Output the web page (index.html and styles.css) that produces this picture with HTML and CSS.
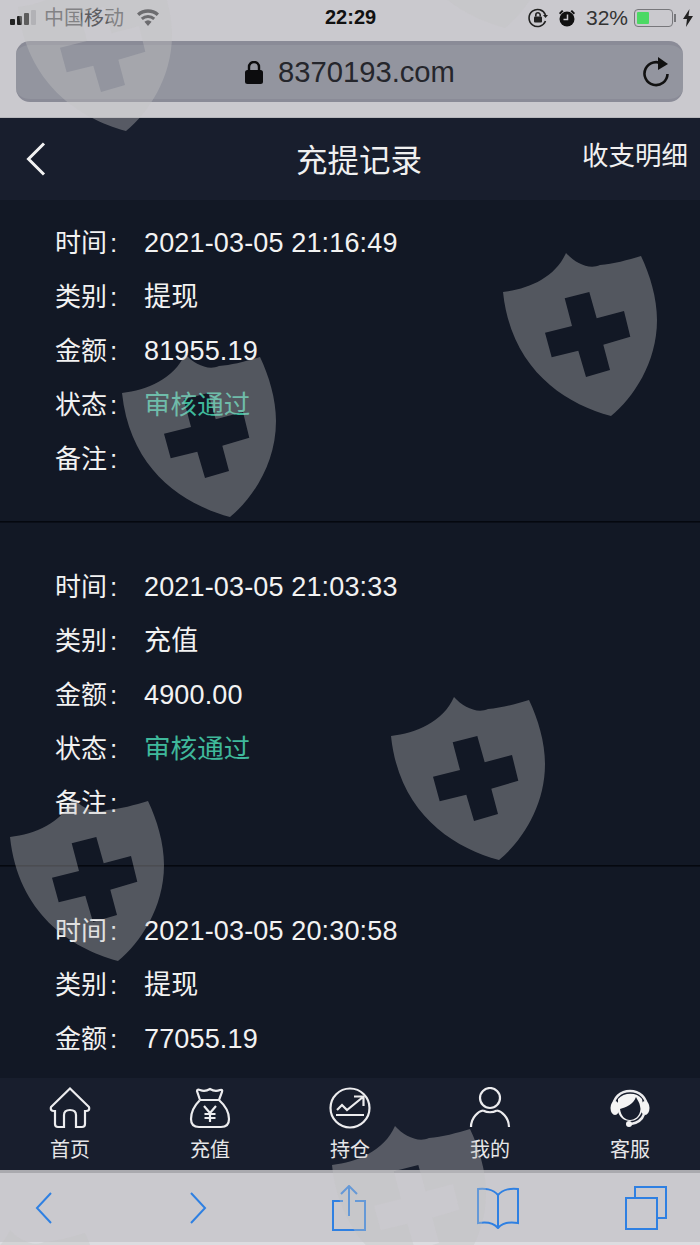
FILE: index.html
```html
<!DOCTYPE html>
<html lang="zh-CN">
<head>
    <meta charset="UTF-8">
    <meta name="viewport" content="width=device-width, initial-scale=1.0">
    <title>充提记录</title>
    <link rel="stylesheet" href="styles.css">
</head>
<body>
    <svg class="defs" width="0" height="0">
        <symbol id="shield" viewBox="0 0 155 164">
            <path fill-rule="evenodd" d="M63 0C72 10 86 17 97 12C110 11 125 7 138 3C147 22 154 45 154 67C154 110 130 145 108 163C60 150 8 115 0 39C25 36 52 25 63 0ZM61.700 45.300L86.300 39L93.700 65.300L121 58L127.300 83.700L100.300 91.700L107 117L83 124L75.300 97.700L48.700 104.300L42 79.700L69 73Z"/>
        </symbol>
    </svg>
    <div class="page">
        <div class="safari-top">
            <div class="status">
                <div class="signal"><i></i><i></i><i></i><i class="off"></i></div>
                <span class="carrier">中国移动</span>
                <svg class="wifi" width="24" height="18" viewBox="0 0 24 18"><path d="M12 17l-3.600-4.200a5.500 5.500 0 0 1 7.200 0zM6.800 11L4.800 8.700a11 11 0 0 1 14.400 0L17.200 11a8 8 0 0 0-10.400 0zM3.300 7L1 4.500a16.500 16.500 0 0 1 22 0L20.700 7a13.500 13.500 0 0 0-17.400 0z"/></svg>
                <span class="time">22:29</span>
                <svg class="rotlock" width="20" height="20" viewBox="0 0 20 20"><path class="ring" d="M17.500 13A8.500 8.500 0 1 1 17.500 7"/><path d="M15 7h5l-2.500 3z"/><rect x="6" y="8.500" width="8" height="6" rx="1"/><path class="ring" d="M7.800 8.500V7a2.200 2.200 0 0 1 4.400 0v1.500"/></svg>
                <svg class="alarm" width="18" height="18" viewBox="0 0 18 18"><circle cx="9" cy="10" r="7.500"/><path d="M1 4l3-3 1.500 1.200-3.300 3.200zM17 4l-3-3-1.500 1.200 3.300 3.200z"/><path class="hand" d="M9.500 5.500V10.500H5.500"/></svg>
                <span class="percent">32%</span>
                <div class="battery"><i></i></div>
                <svg class="bolt" width="10" height="18" viewBox="0 0 10 18"><path d="M6.500 0L0 10h4l-1 8 7-11H5.500z"/></svg>
            </div>
            <div class="urlbar">
                <svg class="lock" width="18" height="23" viewBox="0 0 18 23"><rect y="9" width="18" height="14" rx="2.500"/><path class="shackle" d="M4 10V6a5 5 0 0 1 10 0v4"/></svg>
                <span class="domain">8370193.com</span>
                <svg class="reload" width="28" height="30" viewBox="0 0 28 30"><path class="arc" d="M21 7.500A11.500 11.500 0 1 0 25.500 17"/><path d="M16 0l10 7-10 6z"/></svg>
            </div>
        </div>

        <header class="topbar">
            <svg class="back" width="20" height="34" viewBox="0 0 20 34"><path d="M18 1.500L2.500 17L18 32.500"/></svg>
            <h1 class="title">充提记录</h1>
            <a class="detail">收支明细</a>
        </header>

        <main class="records">
            <div class="record">
                <div class="row"><span class="label">时间<b>:</b></span><span class="value">2021-03-05 21:16:49</span></div>
                <div class="row"><span class="label">类别<b>:</b></span><span class="value">提现</span></div>
                <div class="row"><span class="label">金额<b>:</b></span><span class="value">81955.19</span></div>
                <div class="row"><span class="label">状态<b>:</b></span><span class="value ok">审核通过</span></div>
                <div class="row"><span class="label">备注<b>:</b></span></div>
            </div>
            <div class="record">
                <div class="row"><span class="label">时间<b>:</b></span><span class="value">2021-03-05 21:03:33</span></div>
                <div class="row"><span class="label">类别<b>:</b></span><span class="value">充值</span></div>
                <div class="row"><span class="label">金额<b>:</b></span><span class="value">4900.00</span></div>
                <div class="row"><span class="label">状态<b>:</b></span><span class="value ok">审核通过</span></div>
                <div class="row"><span class="label">备注<b>:</b></span></div>
            </div>
            <div class="record">
                <div class="row"><span class="label">时间<b>:</b></span><span class="value">2021-03-05 20:30:58</span></div>
                <div class="row"><span class="label">类别<b>:</b></span><span class="value">提现</span></div>
                <div class="row"><span class="label">金额<b>:</b></span><span class="value">77055.19</span></div>
            </div>
        </main>

        <nav class="tabbar">
            <a class="tab">
                <svg width="42" height="42" viewBox="0 0 42 42"><path d="M21 1.500L40 20Q41 24 37 24H36V37Q36 40 33 40H27V28Q27 23 21 23Q15 23 15 28V40H9Q6 40 6 37V24H5Q1 24 2 20Z"/></svg>
                <span>首页</span>
            </a>
            <a class="tab">
                <svg width="42" height="42" viewBox="0 0 42 42"><path d="M11 13L8 4Q8 2 11 3Q16 5 21 2Q26 5 31 3Q34 2 33 5L30 13M11 13H30M11 13Q2 22 2 32Q2 40 10 40H32Q40 40 40 32Q40 22 30 13"/><path d="M15 19L21 26L27 19M21 26V35M15.500 27H26.500M15.500 31H26.500"/></svg>
                <span>充值</span>
            </a>
            <a class="tab">
                <svg width="42" height="42" viewBox="0 0 42 42"><circle cx="21" cy="21" r="19.500"/><path d="M8 23L13 18L18 23L34 10M25 9.500H34.500V19M7 28H35"/></svg>
                <span>持仓</span>
            </a>
            <a class="tab">
                <svg width="42" height="42" viewBox="0 0 42 42"><circle cx="21" cy="11" r="10"/><path d="M2 40C2 30 10 24 14 23.500M40 40C40 30 32 24 28 23.500M14 23.500Q21 27 28 23.500"/></svg>
                <span>我的</span>
            </a>
            <a class="tab">
                <svg class="agent" width="42" height="42" viewBox="0 0 42 42"><path class="band" d="M4 22C3 -2 39 -2 38 22"/><ellipse class="pad" cx="6" cy="21" rx="4.500" ry="7"/><ellipse class="pad" cx="36" cy="21" rx="4.500" ry="7"/><path class="hair" d="M9 12C15 5 28 5 33 12C34 16 34 20 33 24C31 31 26 34 21 34C15 34 10 30 9 24Z"/><path class="face" d="M11 22C17 20 24 18 27 10C29 14 31 16 31.500 22C31 29 26 33 21 33C16 33 12 29 11 22Z"/><path class="band" d="M35 27C33 33 28 36 22 37"/><circle class="mic" cx="20" cy="37" r="3"/></svg>
                <span>客服</span>
            </a>
        </nav>

        <div class="safari-bottom">
            <svg class="tool tool-prev" width="17" height="32" viewBox="0 0 17 32"><path d="M16 1L2 16l14 15"/></svg>
            <svg class="tool tool-next" width="17" height="32" viewBox="0 0 17 32"><path d="M1 1l14 15L1 31"/></svg>
            <svg class="tool tool-share" width="34" height="46" viewBox="0 0 34 46"><path d="M11 16H1V45H33V16H23M17 31V2M9 9L17 1L25 9"/></svg>
            <svg class="tool tool-book" width="44" height="42" viewBox="0 0 44 42"><path d="M22 8C17 2 8 1 2 2V36C8 35 17 35 22 41C27 35 36 35 42 36V2C36 1 27 2 22 8ZM22 8V41"/></svg>
            <svg class="tool tool-pages" width="42" height="44" viewBox="0 0 42 44"><path d="M1 12H32V43H1ZM10 12V1H41V32H32"/></svg>
        </div>

        <svg class="wm wm-1"><use href="#shield"/></svg>
        <svg class="wm wm-2"><use href="#shield"/></svg>
        <svg class="wm wm-3"><use href="#shield"/></svg>
        <svg class="wm wm-4"><use href="#shield"/></svg>
        <svg class="wm wm-5"><use href="#shield"/></svg>
        <svg class="wm wm-6"><use href="#shield"/></svg>
        <svg class="wm wm-7"><use href="#shield"/></svg>
        <svg class="wm wm-8"><use href="#shield"/></svg>
    </div>
</body>
</html>
```

FILE: styles.css
```css
*{
    margin: 0;
    padding: 0;
    box-sizing: border-box;
}
body{
    background-color: #121825;
    overflow: hidden;
    font-family: "Liberation Sans", "Noto Sans CJK SC", sans-serif;
}
.defs{
    position: absolute;
}
.page{
    position: relative;
    display: flex;
    flex-direction: column;
    width: 700px;
    height: 1245px;
    overflow: hidden;
}

/* safari chrome */
.safari-top{
    height: 118px;
    background-color: #cac9ce;
    border-bottom: 1px solid #b6b6bb;
}
.status{
    display: flex;
    align-items: center;
    height: 41px;
    padding: 0 7px 6px 10px;
    white-space: nowrap;
}
.signal{
    display: flex;
    align-items: flex-end;
    gap: 2px;
    width: 28px;
    height: 15px;
}
.signal i{
    width: 5px;
    background-color: #222;
    border-radius: 1px;
    height: 6px;
}
.signal i:nth-child(2){ height: 9px; }
.signal i:nth-child(3){ height: 12px; }
.signal i.off{ height: 15px; background-color: #a9a9ae; }
.carrier{
    width: 80px;
    margin-left: 6px;
    font-size: 20px;
    line-height: 24px;
    color: #5c5c60;
}
.wifi{
    margin-left: 12px;
    fill: #3a3a3e;
}
.time{
    margin-left: 165px;
    width: 203px;
    font-size: 20px;
    font-weight: bold;
    color: #111;
}
.rotlock{
    fill: #222;
}
.rotlock .ring{
    fill: none;
    stroke: #222;
    stroke-width: 1.600;
}
.alarm{
    margin-left: 10px;
    fill: #111;
}
.alarm .hand{
    fill: none;
    stroke: #cac9ce;
    stroke-width: 1.500;
}
.percent{
    margin-left: 10px;
    font-size: 21px;
    color: #333;
}
.battery{
    position: relative;
    width: 39px;
    height: 18px;
    margin-left: 6px;
    padding: 2px;
    border: 1px solid #77777b;
    border-radius: 4px;
}
.battery i{
    display: block;
    width: 12px;
    height: 100%;
    background-color: #4cd964;
    border-radius: 1px;
}
.battery::after{
    content: "";
    position: absolute;
    right: -4px;
    top: 4px;
    width: 2px;
    height: 8px;
    background-color: #77777b;
}
.bolt{
    margin-left: 10px;
    fill: #222;
}
.urlbar{
    display: flex;
    align-items: center;
    width: 667px;
    height: 61px;
    margin-left: 16px;
    padding-left: 229px;
    background-color: #93959f;
    border-top: 4px solid #8a8b97;
    border-bottom: 3px solid #8a8b97;
    border-radius: 14px;
}
.lock{
    fill: #0c0c0e;
}
.lock .shackle{
    fill: none;
    stroke: #0c0c0e;
    stroke-width: 2.400;
}
.domain{
    margin-left: 15px;
    font-family: "Liberation Sans", sans-serif;
    font-size: 29.200px;
    color: #25262c;
}
.reload{
    margin-left: 187px;
    fill: #111;
}
.reload .arc{
    fill: none;
    stroke: #111;
    stroke-width: 2.600;
}

/* page header */
.topbar{
    display: flex;
    align-items: center;
    height: 82px;
    padding: 0 12px 0 26px;
    background-color: #181e2d;
}
.back{
    fill: none;
    stroke: #f2f2f2;
    stroke-width: 3;
}
.title{
    margin-left: 250px;
    padding-top: 3px;
    font-size: 31.500px;
    font-weight: normal;
    line-height: 40px;
    color: #f0f0f0;
}
.detail{
    margin-left: auto;
    margin-bottom: 6px;
    font-size: 26.500px;
    line-height: 34px;
    color: #f0f0f0;
}

/* records */
.records{
    flex: 1;
    overflow: hidden;
    background-color: #121825;
}
.record{
    padding: 38px 0 35px 55px;
    border-bottom: 1px solid #05080f;
    box-shadow: 0 1px 0 #0a0e18;
}
.record:first-child{
    padding-top: 16px;
}
.row{
    display: flex;
    height: 54px;
    line-height: 54px;
    color: #f2f2f2;
    font-size: 26px;
}
.label{
    width: 89px;
}
.label b{
    margin-left: 3px;
    font-weight: normal;
}
.value{
    font-size: 27px;
    letter-spacing: .15px;
}
.value.ok{
    font-size: 26.600px;
    letter-spacing: 0;
    color: #3fb89b;
}

/* tabs */
.tabbar{
    display: flex;
    height: 92px;
    background-color: #181e2d;
}
.tab{
    display: flex;
    flex: 1;
    flex-direction: column;
    align-items: center;
    padding-top: 9px;
    color: #e6e6e8;
    font-size: 20px;
}
.tab svg{
    fill: none;
    stroke: #ececee;
    stroke-width: 2.200;
}
.tab span{
    line-height: 26px;
    padding-top: 8px;
}
.agent .band{
    stroke-width: 2.500;
}
.agent .pad,
.agent .hair,
.agent .mic{
    fill: #f4f4f4;
    stroke: none;
}
.agent .face{
    fill: #181e2d;
    stroke: none;
}

/* bottom toolbar */
.safari-bottom{
    display: flex;
    align-items: center;
    height: 75px;
    background-color: #cac9ce;
    border-top: 3px solid #a9a9ae;
    border-bottom: 3px solid #dcdce0;
}
.tool{
    fill: none;
    stroke: #2f80e2;
    stroke-width: 2;
}
.tool-prev{ margin-left: 35px; }
.tool-next{ margin-left: 138px; }
.tool-share{ margin-left: 125px; }
.tool-book{ margin-left: 110px; }
.tool-pages{ margin-left: 105px; }

/* watermark laid over the whole screenshot */
.wm{
    position: absolute;
    width: 155px;
    height: 164px;
    fill: rgba(195, 195, 195, .37);
    pointer-events: none;
}
.wm-1{ left: 503px; top: 253px; }
.wm-2{ left: 122px; top: 354px; }
.wm-3{ left: 391px; top: 697px; }
.wm-4{ left: 10px; top: 798px; }
.wm-5{ left: 332px; top: 1126px; }
.wm-6{ left: 18px; top: -32px; }
.wm-7{ left: 397px; top: -135px; }
.wm-8{ left: -53px; top: 1230px; }
```
